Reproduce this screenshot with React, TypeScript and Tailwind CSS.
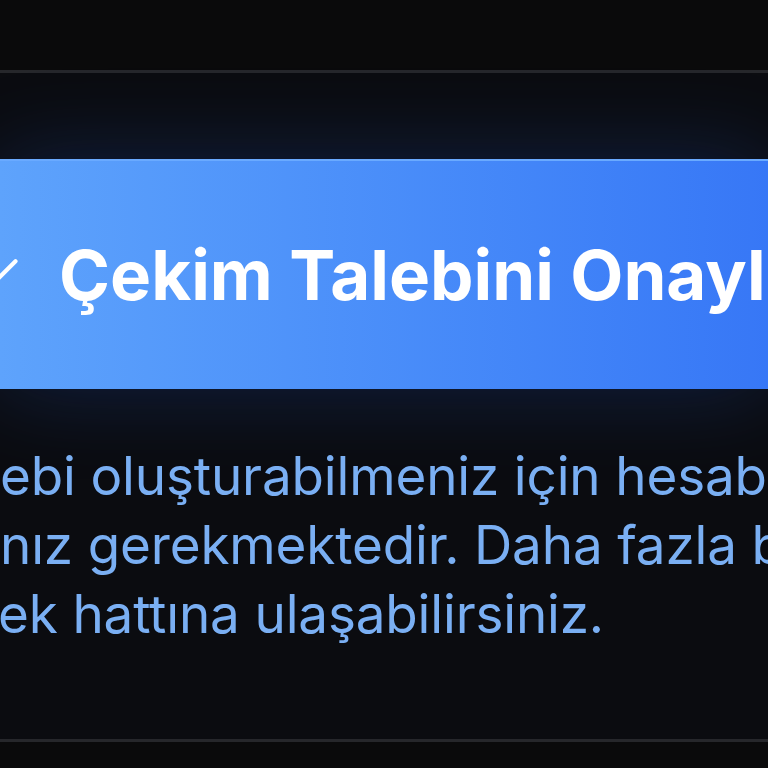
import { Check } from "lucide-react";

export default function App() {
  return (
    <div className="w-[768px] h-[768px] overflow-hidden bg-[#0a0a0b] font-['Inter',sans-serif]">
      <div className="h-[70px]" />

      <div className="border-y-[3px] border-[#26272b] bg-[#0b0c10]">
        <div className="pt-[86px] pb-[90px]">
          <button className="flex h-[230px] w-full items-center overflow-hidden whitespace-nowrap border-t-2 border-[#6aaaff] bg-linear-to-r from-[#5ea3fc] to-[#3777f6] text-white shadow-[0_0_90px_rgba(37,99,235,0.24)]">
            <span className="-ml-[32px] flex items-center gap-[34px]">
              <Check className="h-[57px] w-[57px] shrink-0" strokeWidth={1.75} />
              <span className="text-[69px] font-bold leading-none">
                Çekim Talebini Onayla
              </span>
            </span>
          </button>

          <p className="mt-[53px] whitespace-nowrap text-[53px] leading-[69px] tracking-[-0.003em] text-[#7aaff3]">
            <span className="block">ebi oluşturabilmeniz için hesabınızı doğrulama</span>
            <span className="block">nız gerekmektedir. Daha fazla bilgi için</span>
            <span className="block -ml-[2px]">ek hattına ulaşabilirsiniz.</span>
          </p>
        </div>
      </div>
    </div>
  );
}
